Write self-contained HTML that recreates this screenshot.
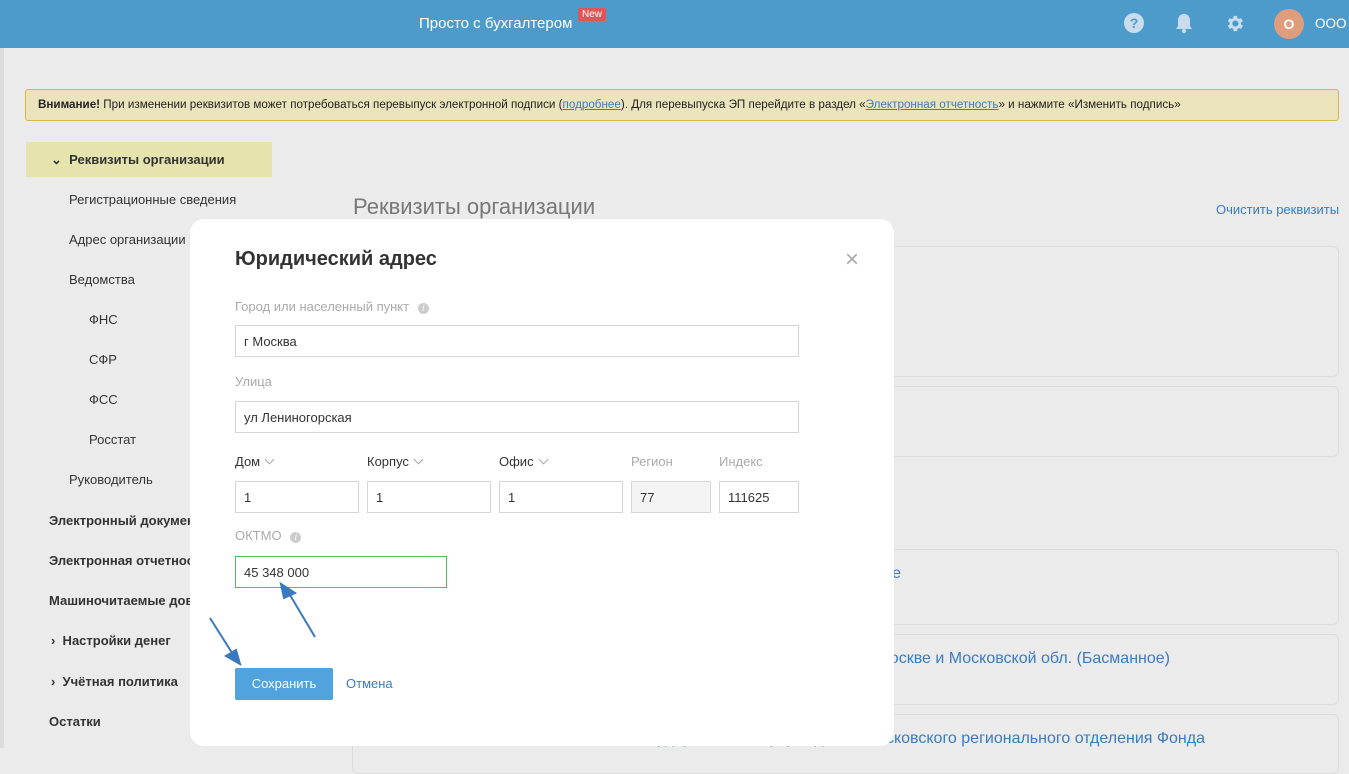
<!DOCTYPE html>
<html><head><meta charset="utf-8"><style>
*{box-sizing:border-box;margin:0;padding:0}
body{width:1349px;height:748px;overflow:hidden;background:#ebebeb;font-family:"Liberation Sans",sans-serif;position:relative;color:#333}
.abs{position:absolute}
.top{left:0;top:0;width:1349px;height:48px;background:#4c9bcb}
.strip{left:0;top:48px;width:4px;height:700px;background:#dcdcdc}
.warn{left:25px;top:89px;width:1314px;height:32px;background:#ebe3bb;border:1px solid #d6b84a;border-radius:3px;font-size:11.65px;color:#222;padding:8px 12px;white-space:nowrap}
a{color:#3a7cc0;text-decoration:underline}
.nav{font-size:13px;color:#333}
.card{left:352px;width:987px;border:1px solid #dcdcdc;border-radius:6px}
.ct{font-size:16px;color:#3a7cc0}
.modal{left:190px;top:219px;width:704px;height:527px;background:#fff;border-radius:14px}
.lbl{font-size:13px;color:#aaa}
.lbd{font-size:13px;color:#333}
.inp{border:1px solid #d5d5d5;height:32px;font-size:13px;padding:8px 8px;color:#333}
.chev{display:inline-block;width:7px;height:7px;border-right:1.5px solid #aaa;border-bottom:1.5px solid #aaa;transform:rotate(45deg);margin-left:6px;position:relative;top:-3px}
</style></head><body>
<div class="abs top"></div>
<div class="abs" style="left:419px;top:15px;font-size:15px;color:#fff">Просто с бухгалтером</div>
<div class="abs" style="left:578px;top:8px;background:#e05656;color:#fff;font-size:10px;padding:1px 4px;border-radius:2px">New</div>
<svg class="abs" style="left:1124px;top:13px" width="20" height="20"><circle cx="10" cy="10" r="10" fill="#c8dcec"/><text x="10" y="15" text-anchor="middle" font-size="14" font-weight="bold" fill="#4c9bcb" font-family="Liberation Sans">?</text></svg>
<svg class="abs" style="left:1175px;top:12px" width="18" height="22"><path d="M9 2c-4 0-6 3-6 7v5l-2 3h16l-2-3V9c0-4-2-7-6-7z" fill="#c8dcec"/><circle cx="9" cy="19" r="2.2" fill="#c8dcec"/></svg>
<svg class="abs" style="left:1224px;top:13px" width="21" height="21" viewBox="0 0 24 24"><path fill="#c8dcec" d="M19.4 13a7.5 7.5 0 000-2l2.1-1.6-2-3.5-2.5 1a7.4 7.4 0 00-1.7-1L15 3.3h-4l-.4 2.6a7.4 7.4 0 00-1.7 1l-2.5-1-2 3.5L6.5 11a7.5 7.5 0 000 2l-2.1 1.6 2 3.5 2.5-1a7.4 7.4 0 001.7 1l.4 2.6h4l.4-2.6a7.4 7.4 0 001.7-1l2.5 1 2-3.5zM13 15.5a3.5 3.5 0 110-7 3.5 3.5 0 010 7z"/></svg>
<div class="abs" style="left:1274px;top:9px;width:30px;height:30px;border-radius:50%;background:#df9d7b;color:#fff;font-weight:bold;font-size:14px;text-align:center;line-height:30px">О</div>
<div class="abs" style="left:1315px;top:16px;color:#fff;font-size:13.5px">ООО</div>
<div class="abs strip"></div>
<div class="abs warn"><b>Внимание!</b> При изменении реквизитов может потребоваться перевыпуск электронной подписи (<a>подробнее</a>). Для перевыпуска ЭП перейдите в раздел «<a>Электронная отчетность</a>» и нажмите «Изменить подпись»</div>
<div class="abs" style="left:26px;top:142px;width:246px;height:35px;background:#e5e3ae"></div>
<div class="abs nav" style="left:51px;top:152px;font-weight:bold">⌄&nbsp; Реквизиты организации</div>
<div class="abs nav" style="left:69px;top:192px">Регистрационные сведения</div>
<div class="abs nav" style="left:69px;top:232px">Адрес организации</div>
<div class="abs nav" style="left:69px;top:272px">Ведомства</div>
<div class="abs nav" style="left:89px;top:312px">ФНС</div>
<div class="abs nav" style="left:89px;top:352px">СФР</div>
<div class="abs nav" style="left:89px;top:392px">ФСС</div>
<div class="abs nav" style="left:89px;top:432px">Росстат</div>
<div class="abs nav" style="left:69px;top:472px">Руководитель</div>
<div class="abs nav" style="left:49px;top:513px;font-weight:bold">Электронный документ</div>
<div class="abs nav" style="left:49px;top:553px;font-weight:bold">Электронная отчетность</div>
<div class="abs nav" style="left:49px;top:593px;font-weight:bold">Машиночитаемые доверенности</div>
<div class="abs nav" style="left:51px;top:633px;font-weight:bold">›&nbsp; Настройки денег</div>
<div class="abs nav" style="left:51px;top:674px;font-weight:bold">›&nbsp; Учётная политика</div>
<div class="abs nav" style="left:49px;top:714px;font-weight:bold">Остатки</div>
<div class="abs" style="left:353px;top:194px;font-size:22px;color:#777">Реквизиты организации</div>
<div class="abs" style="left:1216px;top:202px;font-size:13px;color:#3a7cc0">Очистить реквизиты</div>
<div class="abs card" style="top:246px;height:131px"></div>
<div class="abs card" style="top:386px;height:71px"></div>
<div class="abs card" style="top:549px;height:76px"></div>
<div class="abs card" style="top:634px;height:71px"></div>
<div class="abs card" style="top:714px;height:60px"></div>
<div class="abs ct" style="left:600px;top:565px;width:301px;text-align:right;white-space:nowrap;overflow:hidden">Отделение Фонда в Москве</div>
<div class="abs ct" style="left:500px;top:650px;width:670px;text-align:right;white-space:nowrap">Инспекция Федеральной налоговой службы по г. Москве и Московской обл. (Басманное)</div>
<div class="abs ct" style="left:500px;top:730px;width:705px;text-align:right;white-space:nowrap">Филиал № 1 Государственного учреждения Московского регионального отделения Фонда</div>
<div class="abs modal"></div>
<div class="abs" style="left:235px;top:248px;font-size:20px;font-weight:bold;color:#333">Юридический адрес</div>
<div class="abs" style="left:845px;top:246px;font-size:24px;color:#aaa">×</div>
<div class="abs lbl" style="left:235px;top:299px">Город или населенный пункт <span style="display:inline-block;width:11px;height:11px;border-radius:50%;background:#ccc;color:#fff;font-size:9px;text-align:center;line-height:11px;margin-left:5px;font-style:italic">i</span></div>
<div class="abs inp" style="left:235px;top:325px;width:564px">г Москва</div>
<div class="abs lbl" style="left:235px;top:374px">Улица</div>
<div class="abs inp" style="left:235px;top:401px;width:564px">ул Лениногорская</div>
<div class="abs lbd" style="left:235px;top:454px">Дом<span class="chev"></span></div>
<div class="abs lbd" style="left:367px;top:454px">Корпус<span class="chev"></span></div>
<div class="abs lbd" style="left:499px;top:454px">Офис<span class="chev"></span></div>
<div class="abs lbl" style="left:631px;top:454px">Регион</div>
<div class="abs lbl" style="left:719px;top:454px">Индекс</div>
<div class="abs inp" style="left:235px;top:481px;width:124px">1</div>
<div class="abs inp" style="left:367px;top:481px;width:124px">1</div>
<div class="abs inp" style="left:499px;top:481px;width:124px">1</div>
<div class="abs inp" style="left:631px;top:481px;width:80px;background:#f4f4f4">77</div>
<div class="abs inp" style="left:719px;top:481px;width:80px">111625</div>
<div class="abs lbl" style="left:235px;top:528px">ОКТМО <span style="display:inline-block;width:11px;height:11px;border-radius:50%;background:#ccc;color:#fff;font-size:9px;text-align:center;line-height:11px;margin-left:5px;font-style:italic">i</span></div>
<div class="abs inp" style="left:235px;top:556px;width:212px;border-color:#4cc25a">45 348 000</div>
<div class="abs" style="left:235px;top:668px;width:98px;height:32px;background:#50a3dc;border-radius:2px;color:#fff;font-size:13px;text-align:center;line-height:32px">Сохранить</div>
<div class="abs" style="left:346px;top:676px;font-size:13px;color:#3a7cc0">Отмена</div>
<svg class="abs" style="left:0;top:0" width="1349" height="748"><g stroke="#3a78c0" stroke-width="2" fill="#3a78c0"><line x1="315" y1="637" x2="287" y2="590"/><polygon points="281,584 295,593 284,598"/><line x1="210" y1="618" x2="234" y2="656"/><polygon points="240,664 226,656 236,650"/></g></svg>
</body></html>
